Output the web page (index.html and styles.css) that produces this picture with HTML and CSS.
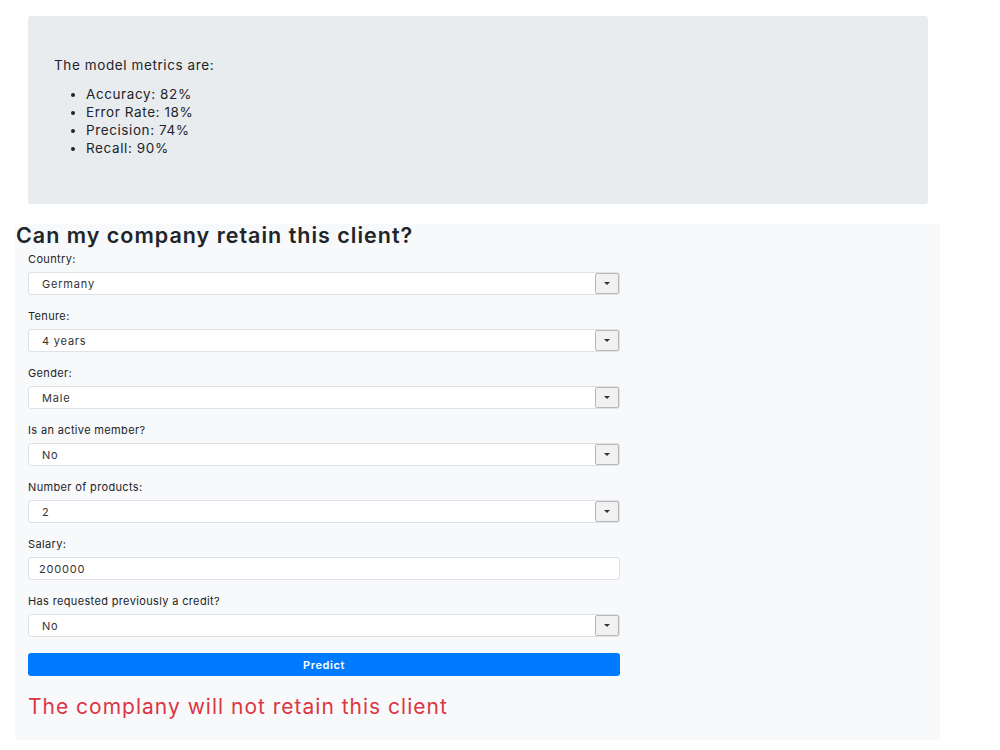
FILE: index.html
```html
<!DOCTYPE html>
<html lang="en">
<head>
    <meta charset="UTF-8">
    <title>Client retention</title>
    <link rel="stylesheet" href="styles.css">
</head>
<body>
    <div class="metrics">
        <p>The model metrics are:</p>
        <ul>
            <li>Accuracy: 82%</li>
            <li>Error Rate: 18%</li>
            <li>Precision: 74%</li>
            <li>Recall: 90%</li>
        </ul>
    </div>

    <div class="panel">
        <h1>Can my company retain this client?</h1>
        <form class="form">
            <div class="field">
                <label>Country:</label>
                <div class="select"><span>Germany</span><span class="arrow"></span></div>
            </div>
            <div class="field">
                <label>Tenure:</label>
                <div class="select"><span>4 years</span><span class="arrow"></span></div>
            </div>
            <div class="field">
                <label>Gender:</label>
                <div class="select"><span>Male</span><span class="arrow"></span></div>
            </div>
            <div class="field">
                <label>Is an active member?</label>
                <div class="select"><span>No</span><span class="arrow"></span></div>
            </div>
            <div class="field">
                <label>Number of products:</label>
                <div class="select"><span>2</span><span class="arrow"></span></div>
            </div>
            <div class="field">
                <label for="salary">Salary:</label>
                <input type="text" id="salary" value="200000">
            </div>
            <div class="field">
                <label>Has requested previously a credit?</label>
                <div class="select"><span>No</span><span class="arrow"></span></div>
            </div>
            <button type="button">Predict</button>
        </form>
        <p class="result">The complany will not retain this client</p>
    </div>
</body>
</html>
```

FILE: styles.css
```css
body {
    font-family: Inter, "Liberation Sans", Arial, sans-serif;
    margin: 0;
    padding: 16px 0 0 0;
    color: #212529;
    background-color: #fff;
}
.metrics {
    margin: 0 72px 0 28px;
    height: 188px;
    box-sizing: border-box;
    padding: 41px 26px 0;
    background-color: #e9ecef;
    border-radius: 3px;
    font-size: 13.5px;
    letter-spacing: 0.6px;
}
.metrics p {
    margin: 0 0 12px;
}
.metrics ul {
    margin: 0;
    padding-left: 32px;
    line-height: 18px;
}
.panel {
    position: relative;
    margin: 20px 60px 0 15px;
    padding: 28px 13px 24px;
    background-color: #f8f9fa;
    height: 516px;
    box-sizing: border-box;
}
h1 {
    position: absolute;
    top: -2px;
    left: 1px;
    margin: 0;
    font-size: 21.5px;
    font-weight: 600;
    letter-spacing: 1px;
    color: #212529;
}
.form {
    width: 592px;
}
.field {
    margin-bottom: 14px;
}
label {
    display: block;
    font-size: 11px;
    line-height: 14px;
    letter-spacing: 0.35px;
    margin-bottom: 6px;
}
.select, input[type="text"] {
    display: flex;
    align-items: center;
    height: 23px;
    box-sizing: border-box;
    background-color: #fff;
    border: 1px solid #dee2e6;
    border-radius: 3px;
    font-size: 11px;
    letter-spacing: 0.8px;
    font-family: inherit;
    color: #333;
}
.select span:first-child {
    flex: 1;
    padding-left: 13px;
}
.arrow {
    width: 24px;
    height: 21px;
    box-sizing: border-box;
    border: 1px solid #b8b8b8;
    border-radius: 2px;
    background-color: #f1f1f1;
    display: flex;
    align-items: center;
    justify-content: center;
}
.arrow::after {
    content: "";
    border-left: 3px solid transparent;
    border-right: 3px solid transparent;
    border-top: 3px solid #333;
}
input[type="text"] {
    width: 100%;
    padding: 0 10px;
}
button {
    width: 100%;
    height: 23px;
    margin-top: 2px;
    background-color: #007bff;
    color: #fff;
    border: none;
    border-radius: 3px;
    font-family: inherit;
    font-size: 11px;
    font-weight: 600;
    letter-spacing: 0.6px;
}
.result {
    margin: 18px 0 0;
    font-size: 21px;
    letter-spacing: 1px;
    color: #dc3545;
}
```
